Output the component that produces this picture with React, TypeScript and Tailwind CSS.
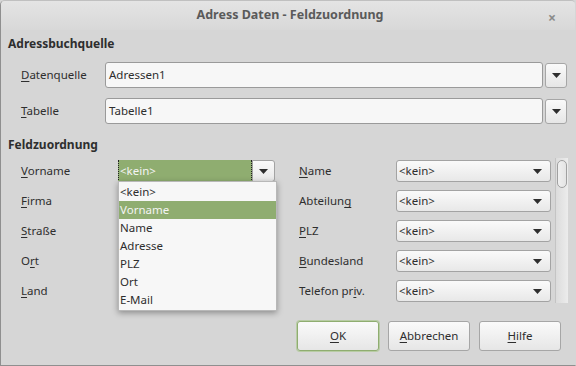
import { ReactNode } from "react"

const font = { fontFamily: '"Noto Sans", "Open Sans", sans-serif' }

function Caret() {
  return (
    <svg width="9" height="5" viewBox="0 0 9 5">
      <path d="M0 0H9L4.5 5Z" fill="#2e2e2e" />
    </svg>
  )
}

// label with one underlined mnemonic letter
function Label({ text, at }: { text: string; at: number }) {
  return (
    <span>
      {text.slice(0, at)}
      <span className="underline underline-offset-2">{text[at]}</span>
      {text.slice(at + 1)}
    </span>
  )
}

function SourceRow({ label, value }: { label: ReactNode; value: string }) {
  return (
    <div className="flex items-center h-[26px]">
      <div className="w-[97px] pl-[13px]">{label}</div>
      <div className="flex-1 h-[26px] bg-[#f7f7f7] border border-[#9a9a9a] rounded-[3px] pl-[3px] flex items-center">
        {value}
      </div>
      <div className="ml-[2px] w-[22px] h-[25px] rounded-[3px] border border-[#a6a6a6] bg-gradient-to-b from-[#fafafa] to-[#e6e6e6] flex items-center justify-center">
        <Caret />
      </div>
    </div>
  )
}

function Combo({ w, value }: { w: string; value?: string }) {
  return (
    <div className={`${w} h-[22px] rounded-[3px] border border-[#a3a3a3] bg-gradient-to-b from-[#fafafa] to-[#e8e8e8] flex items-center justify-between pl-[2px] pr-[8px]`}>
      <span>{value}</span>
      <Caret />
    </div>
  )
}

const leftRows = [
  { t: "Vorname", u: 0 },
  { t: "Firma", u: 0 },
  { t: "Straße", u: 0 },
  { t: "Ort", u: 1 },
  { t: "Land", u: 0 },
]

const rightRows = [
  { t: "Name", u: 0 },
  { t: "Abteilung", u: 8 },
  { t: "PLZ", u: 0 },
  { t: "Bundesland", u: 0 },
  { t: "Telefon priv.", u: 10 },
]

const listItems = ["<kein>", "Vorname", "Name", "Adresse", "PLZ", "Ort", "E-Mail"]

export default function App() {
  return (
    <div style={font} className="w-[576px] h-[366px] text-[11.5px] text-[#2e2e2e] bg-[#d6d6d6]">
      <div className="h-full flex flex-col border-l border-b border-r border-t border-[#8f8f8f] border-r-[#d6d6d6] border-t-[#c0c0c0] rounded-t-[5px] overflow-hidden">
        {/* Title bar */}
        <div className="h-[29px] shrink-0 flex items-center relative bg-gradient-to-b from-[#e4e4e4] to-[#d8d8d8]">
          <div className="flex-1 text-center font-bold text-[12.5px] text-[#5a5a5a] pl-[4px]">
            Adress Daten - Feldzuordnung
          </div>
          <div className="absolute right-[19px] top-[6px] text-[#8a8a8a] text-[14px] font-bold">×</div>
        </div>

        {/* Content */}
        <div className="flex-1 px-[7px] pt-[5px] relative">
          <div className="font-bold text-[12px] leading-[18px]">Adressbuchquelle</div>
          <div className="mt-[9px] pr-[1px] flex flex-col gap-[10px]">
            <SourceRow label={<Label text="Datenquelle" at={0} />} value="Adressen1" />
            <SourceRow label={<Label text="Tabelle" at={0} />} value="Tabelle1" />
          </div>

          <div className="mt-[12px] font-bold text-[12px] leading-[18px]">Feldzuordnung</div>

          <div className="mt-[6px] flex">
            {/* left column */}
            <div className="flex flex-col gap-[8px] pl-[13px]">
              {leftRows.map((r, i) => (
                <div key={r.t} className="flex items-center h-[22px]">
                  <div className="w-[97px]">
                    <Label text={r.t} at={r.u} />
                  </div>
                  {i === 0 ? (
                    <div className="w-[157px] h-[22px] flex items-center">
                      <div className="flex-1 h-[22px] bg-[#8fad70] text-[#f4f4f4] border-l border-r border-dotted border-[#222] flex items-center pl-[1px]">
                        &lt;kein&gt;
                      </div>
                      <div className="w-[23px] h-[22px] rounded-r-[3px] border border-[#a3a3a3] bg-gradient-to-b from-[#fafafa] to-[#e8e8e8] flex items-center justify-center">
                        <Caret />
                      </div>
                    </div>
                  ) : (
                    <Combo w="w-[157px]" />
                  )}
                </div>
              ))}
            </div>

            {/* right column */}
            <div className="ml-[24px] flex flex-col gap-[8px]">
              {rightRows.map((r) => (
                <div key={r.t} className="flex items-center h-[22px]">
                  <div className="w-[97px]">
                    <Label text={r.t} at={r.u} />
                  </div>
                  <Combo w="w-[155px]" value="<kein>" />
                </div>
              ))}
            </div>

            {/* scrollbar */}
            <div className="ml-[4px] -mt-[2px] w-[13px] h-[145px] bg-gradient-to-r from-[#dcdcdc] to-[#ececec] border-l border-[#c4c4c4] pt-[2px] flex justify-center">
              <div className="w-[10px] h-[28px] rounded-[5px] border border-[#a0a0a0] bg-gradient-to-r from-[#f0f0f0] to-[#e4e4e4]" />
            </div>
          </div>

          {/* buttons */}
          <div className="mt-[18px] flex justify-end gap-[9px] pr-[7px]">
            <div className="w-[82px] h-[30px] rounded-[3px] border border-[#8fad70] shadow-[0_0_0_1px_#b8cca4] bg-gradient-to-b from-[#fafafa] to-[#e6e6e6] flex items-center justify-center">
              <Label text="OK" at={0} />
            </div>
            <div className="w-[82px] h-[30px] rounded-[3px] border border-[#a6a6a6] bg-gradient-to-b from-[#fafafa] to-[#e6e6e6] flex items-center justify-center">
              <Label text="Abbrechen" at={0} />
            </div>
            <div className="w-[82px] h-[30px] rounded-[3px] border border-[#a6a6a6] bg-gradient-to-b from-[#fafafa] to-[#e6e6e6] flex items-center justify-center">
              <Label text="Hilfe" at={0} />
            </div>
          </div>

          {/* open dropdown list */}
          <div className="absolute left-[117px] top-[151px] w-[159px] bg-[#f7f7f7] border border-[#b8b8b8] shadow-[0_2px_6px_rgba(0,0,0,0.35)] py-[1px]">
            {listItems.map((it) => (
              <div
                key={it}
                className={`h-[18px] leading-[18px] pl-[1px] ${it === "Vorname" ? "bg-[#8fad70] text-[#f4f4f4]" : ""}`}
              >
                {it}
              </div>
            ))}
          </div>
        </div>
      </div>
    </div>
  )
}
